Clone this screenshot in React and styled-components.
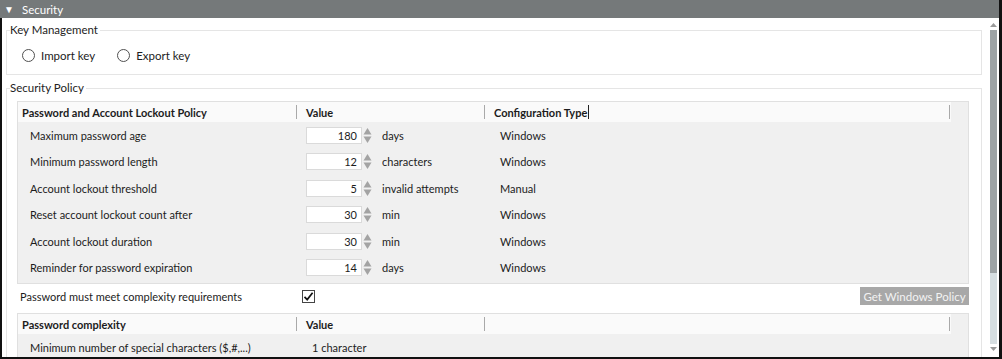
import React from 'react';
import styled, { createGlobalStyle } from 'styled-components';

const GlobalStyle = createGlobalStyle`
  html, body {
    margin: 0;
    padding: 0;
    background: #ffffff;
  }
  body {
    font-family: Lato, 'Liberation Sans', sans-serif;
    font-size: 11px;
    color: #1c1c1c;
  }
`;

const Frame = styled.div`
  width: 1002px;
  height: 359px;
  box-sizing: border-box;
  border-right: 3px solid #111;
  border-bottom: 2px solid #111;
  display: flex;
  flex-direction: column;
  overflow: hidden;
  background: #fff;
`;

const TitleBar = styled.div`
  height: 18px;
  flex: none;
  background: #75797a;
  color: #fff;
  display: flex;
  align-items: center;
  padding-left: 4px;
  font-size: 11.5px;
`;

const Caret = styled.span`
  font-size: 10px;
  width: 18px;
`;

const Body = styled.div`
  flex: 1;
  min-height: 0;
  display: flex;
  border-left: 2px solid #111;
`;

const Content = styled.div`
  flex: 1;
  min-width: 0;
  padding: 0 6px 0 4px;
  overflow: hidden;
`;

const Group = styled.fieldset`
  margin: ${({ $top }) => $top}px 0 0 0;
  padding: 0 12px 0 10px;
  border: 1px solid #e5e5e5;
  min-inline-size: 0;
`;

const Legend = styled.legend`
  margin-left: -7px;
  padding: 0 2px 0 0;
  line-height: 16px;
  font-size: 11.5px;
  color: #232323;
`;

const RadioRow = styled.div`
  display: flex;
  align-items: center;
  height: 16px;
  padding: 9px 0 11px 5px;
  gap: 22px;
  font-size: 11.5px;
`;

const RadioLabel = styled.label`
  display: flex;
  align-items: center;
  gap: 6px;
`;

const RadioDot = styled.span`
  width: 11px;
  height: 11px;
  border: 1px solid #505050;
  border-radius: 50%;
  background: #fff;
`;

const Panel = styled.div`
  margin-top: ${({ $top }) => $top}px;
  padding-bottom: ${({ $bottom = 0 }) => $bottom}px;
  border: 1px solid #e0e0e0;
  background: #f0f0f0;
`;

const HeadRow = styled.div`
  display: grid;
  grid-template-columns: 278px 188px 1fr;
  height: 20px;
  margin-right: 17px;
  background: #fafafa;
  font-weight: 700;
  align-items: center;
`;

const HeadCell = styled.div`
  display: flex;
  align-items: center;
  padding-left: ${({ $pad }) => $pad}px;
  height: 100%;
`;

const Sep = styled.span`
  width: 1px;
  height: 14px;
  background: #a9a9a9;
  margin-right: 9px;
`;

const EndSep = styled.span`
  width: 1px;
  height: 14px;
  background: #a9a9a9;
  margin-left: auto;
  margin-right: 1px;
`;

const TextCaret = styled.span`
  width: 1px;
  height: 14px;
  background: #222;
  margin-left: 1px;
`;

const Row = styled.div`
  display: grid;
  grid-template-columns: 278px 188px 1fr;
  height: 26.5px;
  align-items: center;
`;

const RowLabel = styled.div`
  padding-left: 12px;
  white-space: nowrap;
`;

const ValueCell = styled.div`
  display: flex;
  align-items: center;
  padding-left: ${({ $pad }) => $pad}px;
`;

const NumBox = styled.div`
  width: 56px;
  height: 17px;
  box-sizing: border-box;
  border: 1px solid #dadada;
  background: #fff;
  text-align: right;
  padding-right: 4px;
  line-height: 15px;
`;

const Unit = styled.span`
  margin-left: 10px;
`;

const TypeCell = styled.div`
  padding-left: 16px;
`;

const Spin = () => (
  <svg width="9" height="17" viewBox="0 0 9 17" style={{ marginLeft: 1 }}>
    <path d="M4.5 1 L8.5 7.5 L0.5 7.5 Z" fill="#a3a3a3" />
    <path d="M4.5 16 L8.5 9.5 L0.5 9.5 Z" fill="#a3a3a3" />
  </svg>
);

const CheckRow = styled.div`
  display: grid;
  grid-template-columns: 279px 1fr auto;
  align-items: center;
  height: 20px;
  padding-top: 2px;
  margin-bottom: 7px;
`;

const CheckLabel = styled.div`
  padding-left: 3px;
`;

const CheckBox = styled.span`
  width: 13px;
  height: 13px;
  box-sizing: border-box;
  border: 1px solid #444;
  background: #fff;
  margin-left: 6px;
  display: flex;
  align-items: center;
  justify-content: center;
`;

const PolicyButton = styled.button`
  width: 109px;
  height: 18px;
  border: none;
  padding: 0;
  background: #a8a8a8;
  color: #f3f3f3;
  font-family: inherit;
  font-size: 11.5px;
`;

const ScrollBar = styled.div`
  width: 10px;
  margin-right: 1px;
  flex: none;
  display: flex;
  flex-direction: column;
  align-items: center;
  padding: 2px 0 3px;
`;

const Arrow = styled.div`
  height: 10px;
  display: flex;
  align-items: center;
  justify-content: center;
`;

const Thumb = styled.div`
  width: 7px;
  height: 243px;
  background: #9da3a5;
`;

const Track = styled.div`
  width: 7px;
  flex: 1;
  background: #d6dee1;
`;

const policies = [
  { label: 'Maximum password age', value: 180, unit: 'days', type: 'Windows' },
  { label: 'Minimum password length', value: 12, unit: 'characters', type: 'Windows' },
  { label: 'Account lockout threshold', value: 5, unit: 'invalid attempts', type: 'Manual' },
  { label: 'Reset account lockout count after', value: 30, unit: 'min', type: 'Windows' },
  { label: 'Account lockout duration', value: 30, unit: 'min', type: 'Windows' },
  { label: 'Reminder for password expiration', value: 14, unit: 'days', type: 'Windows' },
];

const App = () => (
  <>
    <GlobalStyle />
    <Frame>
      <TitleBar>
        <Caret>▼</Caret>
        Security
      </TitleBar>
      <Body>
        <Content>
          <Group $top={4}>
            <Legend>Key Management</Legend>
            <RadioRow>
              <RadioLabel>
                <RadioDot />
                Import key
              </RadioLabel>
              <RadioLabel>
                <RadioDot />
                Export key
              </RadioLabel>
            </RadioRow>
          </Group>

          <Group $top={5}>
            <Legend>Security Policy</Legend>
            <Panel $top={5} $bottom={2}>
              <HeadRow>
                <HeadCell $pad={4}>Password and Account Lockout Policy</HeadCell>
                <HeadCell>
                  <Sep />
                  Value
                </HeadCell>
                <HeadCell>
                  <Sep />
                  Configuration Type
                  <TextCaret />
                  <EndSep />
                </HeadCell>
              </HeadRow>
              {policies.map(p => (
                <Row key={p.label}>
                  <RowLabel>{p.label}</RowLabel>
                  <ValueCell $pad={10}>
                    <NumBox>{p.value}</NumBox>
                    <Spin />
                    <Unit>{p.unit}</Unit>
                  </ValueCell>
                  <TypeCell>{p.type}</TypeCell>
                </Row>
              ))}
            </Panel>

            <CheckRow>
              <CheckLabel>Password must meet complexity requirements</CheckLabel>
              <CheckBox>
                <svg width="11" height="11" viewBox="0 0 11 11">
                  <path d="M1.5 5.8 L4.2 8.6 L9.6 1.8" fill="none" stroke="#111" strokeWidth="1.7" />
                </svg>
              </CheckBox>
              <PolicyButton>Get Windows Policy</PolicyButton>
            </CheckRow>

            <Panel $top={0}>
              <HeadRow>
                <HeadCell $pad={4}>Password complexity</HeadCell>
                <HeadCell>
                  <Sep />
                  Value
                </HeadCell>
                <HeadCell>
                  <Sep />
                  <EndSep />
                </HeadCell>
              </HeadRow>
              <Row>
                <RowLabel>Minimum number of special characters ($,#,...)</RowLabel>
                <ValueCell $pad={16}>1 character</ValueCell>
                <TypeCell />
              </Row>
            </Panel>
          </Group>
        </Content>
        <ScrollBar>
          <Arrow>
            <svg width="7" height="4" viewBox="0 0 7 4">
              <path d="M3.5 0 L7 4 L0 4 Z" fill="#9a9a9a" />
            </svg>
          </Arrow>
          <Thumb />
          <Track />
          <Arrow>
            <svg width="7" height="4" viewBox="0 0 7 4">
              <path d="M0 0 L7 0 L3.5 4 Z" fill="#9a9a9a" />
            </svg>
          </Arrow>
        </ScrollBar>
      </Body>
    </Frame>
  </>
);

export default App;
